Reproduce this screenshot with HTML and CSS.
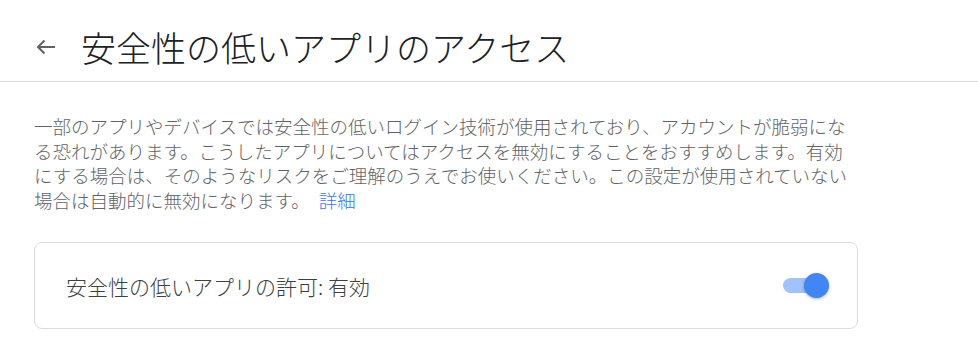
FILE: index.html
```html
<!DOCTYPE html>
<html lang="ja">
<head>
  <meta charset="UTF-8">
  <meta name="viewport" content="width=device-width, initial-scale=1.0">
  <title>安全性の低いアプリのアクセス</title>
  <link rel="stylesheet" href="styles.css">
</head>
<body>
  <header class="top-bar">
    <a href="#" class="back-btn" aria-label="戻る">
      <svg width="20" height="16" viewBox="0 0 20 16">
        <path d="M19 8H2M8.5 1.5L2 8l6.5 6.5" fill="none" stroke="#5f6368" stroke-width="2"/>
      </svg>
    </a>
    <h1 class="page-title">安全性の低いアプリのアクセス</h1>
  </header>

  <main class="content">
    <p class="intro">一部のアプリやデバイスでは安全性の低いログイン技術が使用されており、アカウントが脆弱になる恐れがあります。こうしたアプリについてはアクセスを無効にすることをおすすめします。有効にする場合は、そのようなリスクをご理解のうえでお使いください。この設定が使用されていない場合は自動的に無効になります。<a href="#" class="more-link">詳細</a></p>

    <div class="setting-card">
      <span class="setting-label">安全性の低いアプリの許可: 有効</span>
      <span class="switch" role="switch" aria-checked="true">
        <span class="switch-track"></span>
        <span class="switch-knob"></span>
      </span>
    </div>
  </main>
</body>
</html>
```

FILE: styles.css
```css
/* Less secure app access page */
body {
  margin: 0;
  padding: 0;
  font-family: "Noto Sans CJK JP", "Noto Sans", sans-serif;
  background-color: #fff;
  color: #202124;
}

.top-bar {
  display: flex;
  align-items: center;
  height: 69px;
  padding: 12px 0 0 36px;
  border-bottom: 1px solid #dadce0;
}

.back-btn {
  display: flex;
  width: 20px;
  height: 16px;
  margin-right: 25px;
}

.page-title {
  margin: 0;
  font-size: 35px;
  font-weight: 300;
  color: #202124;
}

.content {
  padding: 0 34px;
  width: 824px;
}

.intro {
  margin: 32px 0 30px;
  font-size: 18.5px;
  font-weight: 300;
  line-height: 24.5px;
  color: #5f6368;
}

.more-link {
  display: inline-block;
  margin-left: 9px;
  color: #3b78e7;
  text-decoration: none;
}

.setting-card {
  display: flex;
  align-items: center;
  justify-content: space-between;
  height: 85px;
  padding: 0 28px 0 31px;
  border: 1px solid #dadce0;
  border-radius: 8px;
}

.setting-label {
  font-size: 21px;
  font-weight: 300;
  color: #3c4043;
}

.switch {
  position: relative;
  display: block;
  width: 46px;
  height: 25px;
}

.switch-track {
  position: absolute;
  left: 0;
  top: 5px;
  width: 40px;
  height: 15px;
  border-radius: 8px;
  background-color: #a1c2fa;
}

.switch-knob {
  position: absolute;
  right: 0;
  top: 0;
  width: 25px;
  height: 25px;
  border-radius: 50%;
  background-color: #4285f4;
  box-shadow: 0 1px 3px rgba(0, 0, 0, 0.3);
}
```
